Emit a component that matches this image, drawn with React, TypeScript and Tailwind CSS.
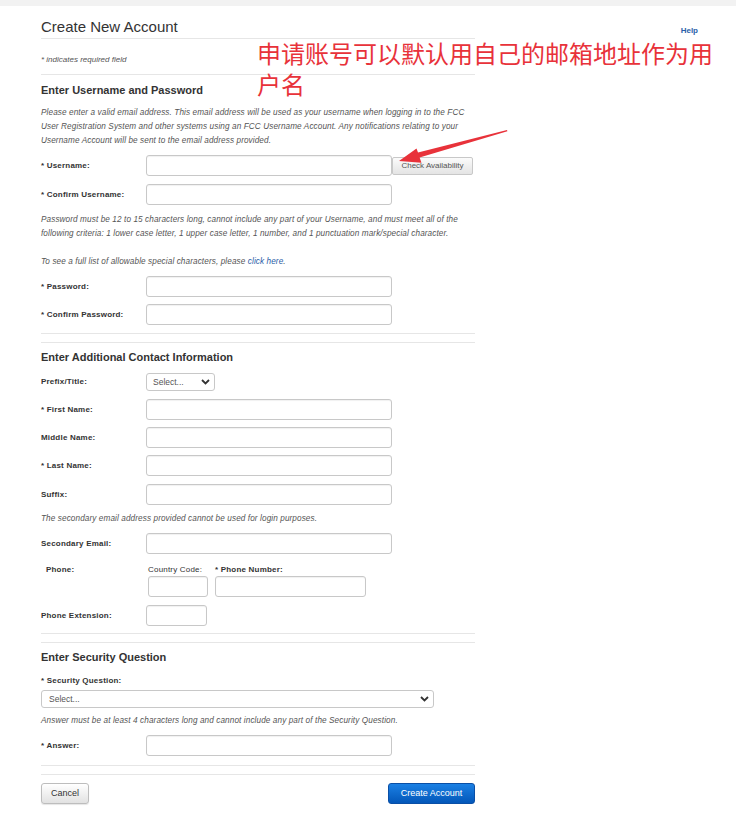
import { ReactNode } from "react";

const Label = ({ children, className = "" }: { children: ReactNode; className?: string }) => (
    <div className={`w-[105px] shrink-0 text-[8px] leading-[10px] font-bold tracking-[0.2px] text-[#333] ${className}`}>{children}</div>
);

const TextBox = ({ className = "w-[246px]" }: { className?: string }) => (
    <input
        type="text"
        className={`h-[21px] ${className} rounded-[3px] border border-[#c8c8c8] bg-white shadow-[inset_0_1px_1px_rgba(0,0,0,0.06)] outline-none`}
    />
);

const Row = ({ label, className = "", children }: { label: string; className?: string; children?: ReactNode }) => (
    <div className={`flex items-center ${className}`}>
        <Label>{label}</Label>
        {children ?? <TextBox />}
    </div>
);

const Note = ({ children, className = "" }: { children: ReactNode; className?: string }) => (
    <p className={`whitespace-nowrap text-[8.2px] leading-[14px] italic tracking-[0.1px] text-[#555] ${className}`}>{children}</p>
);

const Divider = ({ className = "" }: { className?: string }) => (
    <>
        <div className={`border-t border-[#e6e6e6] ${className}`} />
        <div className="mt-[8px] border-t border-[#e6e6e6]" />
    </>
);

const Heading = ({ children }: { children: ReactNode }) => (
    <h2 className="mt-[8px] text-[11px] leading-[13px] font-bold text-[#333]">{children}</h2>
);

const Chevron = () => (
    <svg width="9" height="6" viewBox="0 0 9 6" fill="none">
        <path d="M1 1l3.5 3.5L8 1" stroke="#333" strokeWidth="1.8" />
    </svg>
);

export default function App() {
    return (
        <div className="relative min-h-[834px] bg-white font-['Liberation_Sans',Arial,sans-serif]">
            <div className="h-[6px] bg-[#f2f2f2]" />

            <div className="flex">
                <div className="ml-[41px] w-[434px] pb-[20px]">
                    <h1 className="mt-[12px] border-b border-[#e6e6e6] pb-[2px] text-[15px] leading-[18px] text-[#333]">
                        Create New Account
                    </h1>
                    <p className="mt-[16px] border-b border-[#e6e6e6] pb-[9px] text-[8px] leading-[10px] italic text-[#555]">
                        * indicates required field
                    </p>

                    <h2 className="mt-[9px] text-[11px] leading-[13px] font-bold text-[#333]">Enter Username and Password</h2>
                    <Note className="mt-[9px]">
                        Please enter a valid email address. This email address will be used as your username when logging in to the FCC
                        <br />
                        User Registration System and other systems using an FCC Username Account. Any notifications relating to your
                        <br />
                        Username Account will be sent to the email address provided.
                    </Note>

                    <Row label="* Username:" className="mt-[7px]">
                        <TextBox />
                        <button className="h-[18px] w-[81px] rounded-[2px] border border-[#c8c8c8] bg-gradient-to-b from-[#fbfbfb] to-[#e4e4e4] text-[8px] text-[#555]">
                            Check Availability
                        </button>
                    </Row>
                    <Row label="* Confirm Username:" className="mt-[8px]" />

                    <Note className="mt-[8px]">
                        Password must be 12 to 15 characters long, cannot include any part of your Username, and must meet all of the
                        <br />
                        following criteria: 1 lower case letter, 1 upper case letter, 1 number, and 1 punctuation mark/special character.
                    </Note>
                    <Note className="mt-[14px]">
                        To see a full list of allowable special characters, please <span className="text-[#2a5ea8]">click here</span>.
                    </Note>

                    <Row label="* Password:" className="mt-[7px]" />
                    <Row label="* Confirm Password:" className="mt-[7px]" />

                    <Divider className="mt-[8px]" />

                    <Heading>Enter Additional Contact Information</Heading>
                    <Row label="Prefix/Title:" className="mt-[9px]">
                        <div className="flex h-[18px] w-[69px] items-center justify-between rounded-[3px] border border-[#c8c8c8] bg-white pl-[6px] pr-[4px] text-[8.5px] text-[#555]">
                            <span>Select...</span>
                            <Chevron />
                        </div>
                    </Row>
                    <Row label="* First Name:" className="mt-[8px]" />
                    <Row label="Middle Name:" className="mt-[7px]" />
                    <Row label="* Last Name:" className="mt-[7px]" />
                    <Row label="Suffix:" className="mt-[8px]" />

                    <p className="mt-[9px] whitespace-nowrap text-[8.2px] leading-[10px] italic tracking-[0.1px] text-[#555]">
                        The secondary email address provided cannot be used for login purposes.
                    </p>
                    <Row label="Secondary Email:" className="mt-[9px]" />

                    <div className="mt-[11px] flex">
                        <Label className="pl-[5px]">Phone:</Label>
                        <div className="ml-[2px] flex gap-[7px]">
                            <div className="flex flex-col">
                                <span className="text-[8px] leading-[10px] tracking-[0.2px] text-[#333]">Country Code:</span>
                                <TextBox className="mt-[1px] w-[60px]" />
                            </div>
                            <div className="flex flex-col">
                                <span className="text-[8px] leading-[10px] font-bold tracking-[0.2px] text-[#333]">* Phone Number:</span>
                                <TextBox className="mt-[1px] w-[151px]" />
                            </div>
                        </div>
                    </div>
                    <Row label="Phone Extension:" className="mt-[8px]">
                        <TextBox className="w-[61px]" />
                    </Row>

                    <Divider className="mt-[7px]" />

                    <Heading>Enter Security Question</Heading>
                    <div className="mt-[12px] text-[8px] leading-[10px] font-bold tracking-[0.2px] text-[#333]">* Security Question:</div>
                    <div className="mt-[4px] flex h-[18px] w-[393px] items-center justify-between rounded-[3px] border border-[#c8c8c8] bg-white pl-[7px] pr-[4px] text-[8.5px] text-[#555]">
                        <span>Select...</span>
                        <Chevron />
                    </div>
                    <p className="mt-[8px] whitespace-nowrap text-[8.2px] leading-[10px] italic tracking-[0.1px] text-[#555]">
                        Answer must be at least 4 characters long and cannot include any part of the Security Question.
                    </p>
                    <Row label="* Answer:" className="mt-[9px]" />

                    <Divider className="mt-[9px]" />

                    <div className="mt-[8px] flex items-center justify-between">
                        <button className="h-[21px] w-[48px] rounded-[3px] border border-[#bdbdbd] bg-gradient-to-b from-[#ffffff] to-[#e2e2e2] text-[9px] text-[#333] shadow-[0_1px_1px_rgba(0,0,0,0.1)]">
                            Cancel
                        </button>
                        <button className="h-[21px] w-[87px] rounded-[3px] border border-[#0a4fa6] bg-gradient-to-b from-[#1b80e4] to-[#0457b9] text-[9px] text-white">
                            Create Account
                        </button>
                    </div>
                </div>

                <div className="flex flex-1 justify-end pr-[38px] pt-[20px]">
                    <a className="text-[8px] leading-[10px] font-bold text-[#2a5ea8]">Help</a>
                </div>
            </div>

            {/* annotation pasted on top of the screenshot */}
            <div className="absolute left-[257px] top-[37px] w-[470px] font-['Noto_Sans_CJK_SC',sans-serif] text-[24px] leading-[31px] text-[#e8323a]">
                申请账号可以默认用自己的邮箱地址作为用户名
            </div>
            <svg className="pointer-events-none absolute left-0 top-0" width="736" height="834">
                <polygon
                    points="399,161 416.5,148.5 418,152.5 507,130 507.4,131.2 419.6,157.6 421.5,162.8"
                    fill="#e8323a"
                />
            </svg>
        </div>
    );
}
